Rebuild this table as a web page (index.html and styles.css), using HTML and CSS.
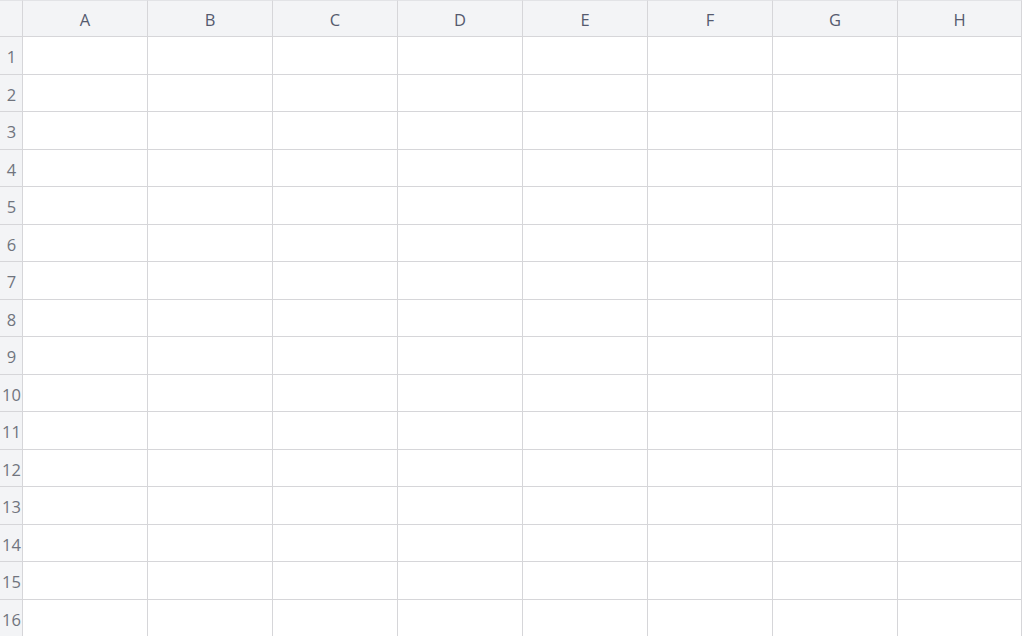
FILE: index.html
```html
<!DOCTYPE html>
<html>
<head>
<meta charset="utf-8">
<link rel="stylesheet" href="styles.css">
</head>
<body>
<div class="sheet" id="sheet">
  <div class="cell corner"></div>
  <div class="cell colhead">A</div>
  <div class="cell colhead">B</div>
  <div class="cell colhead">C</div>
  <div class="cell colhead">D</div>
  <div class="cell colhead">E</div>
  <div class="cell colhead">F</div>
  <div class="cell colhead">G</div>
  <div class="cell colhead">H</div>
</div>
<script>
  var s = document.getElementById('sheet');
  for (var r = 1; r <= 16; r++) {
    var h = document.createElement('div');
    h.className = 'cell rowhead';
    h.textContent = r;
    s.appendChild(h);
    for (var c = 0; c < 8; c++) {
      var d = document.createElement('div');
      d.className = 'cell data';
      s.appendChild(d);
    }
  }
</script>
</body>
</html>
```
FILE: styles.css
```css
html, body {
  margin: 0;
  padding: 0;
  background: #ffffff;
  overflow: hidden;
}
.sheet {
  display: grid;
  grid-template-columns: 23px repeat(7, 125px) 124px;
  grid-template-rows: 37px repeat(16, 37.5px);
  width: 1022px;
  font-family: "Open Sans", "Noto Sans", sans-serif;
}
.cell {
  box-sizing: border-box;
  border-right: 1px solid #d6d6d9;
  border-bottom: 1px solid #d6d6d9;
  display: flex;
  align-items: center;
  justify-content: center;
}
.corner, .colhead {
  background: #f3f4f6;
  border-top: 1px solid #e2e3e6;
}
.colhead {
  color: #555a6e;
  font-size: 16.5px;
  padding-top: 2px;
}
.rowhead {
  background: #f3f4f6;
  color: #70747e;
  font-size: 16.5px;
  overflow: visible;
  white-space: nowrap;
  padding-top: 3px;
  padding-left: 1px;
}
.data {
  background: #ffffff;
}
```
